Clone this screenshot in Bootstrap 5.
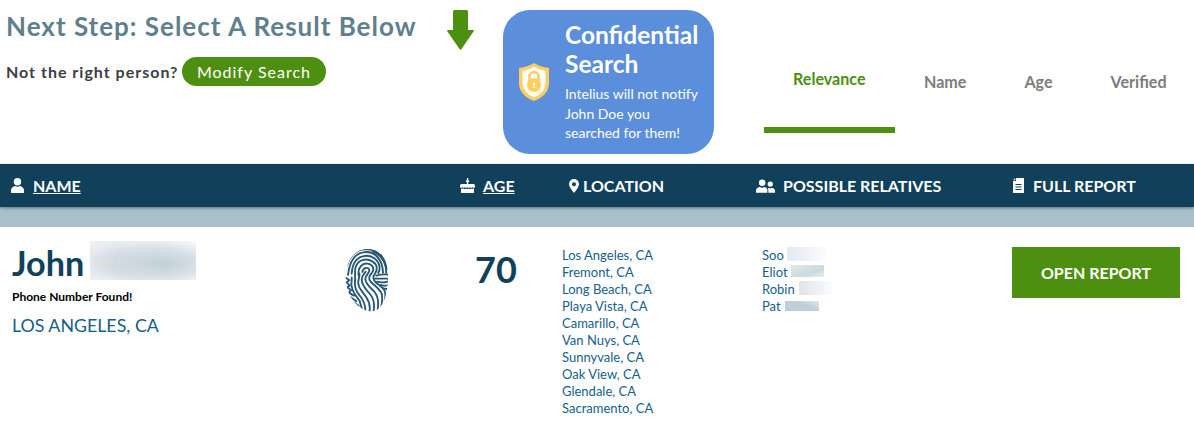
<!DOCTYPE html>
<html lang="en">
<head>
<meta charset="utf-8">
<meta name="viewport" content="width=device-width, initial-scale=1">
<title>Search Results</title>
<link href="https://cdn.jsdelivr.net/npm/bootstrap@5.3.0/dist/css/bootstrap.min.css" rel="stylesheet">
<style>
  body { font-family: Lato, "Liberation Sans", sans-serif; color: #10405a; background: #fff; overflow: hidden; }
  .top-bar { height: 164px; }
  .intro { width: 503px; padding: 10px 0 0 6px; }
  .step-title { font-size: 26px; line-height: 34px; font-weight: 700; letter-spacing: 1px; color: #5f7f8c; width: 441px; margin-top: -1px; }
  .wrong-person { font-size: 16px; font-weight: 700; letter-spacing: 1px; color: #3c4043; margin-top: 7px; }
  .btn-modify { background: #4d8f10; color: #fff; font-size: 16px; line-height: 29px; letter-spacing: 1px; padding: 0 14.5px; border-radius: 15px; border: 0; margin-left: 4px; }
  .notice { width: 211px; height: 144px; margin-top: 10px; padding: 11px 0 0 16px; border-radius: 27px; background: #5b8edb; color: #fff; }
  .notice svg { margin-top: 42px; margin-right: 16px; }
  .notice-title { font-size: 24.5px; line-height: 29px; font-weight: 700; margin-top: -1px; }
  .notice-text { font-size: 14px; line-height: 19.5px; margin-top: 6px; }
  .sort-tabs { margin-left: 50px; height: 133px; font-size: 16.1px; line-height: 24px; font-weight: 700; color: #7c7c7c; }
  .sort-tabs .sort-tab { padding: 70px 29px 0; }
  .sort-tabs .sort-on { padding-top: 67px; color: #4d8f10; border-bottom: 6px solid #4d8f10; width: 131px; }
  .result-grid { display: grid; grid-template-columns: 345px 115px 102px 194px 256px 182px; }
  .result-head { height: 43px; background: #10405a; color: #fff; font-size: 16px; font-weight: 700; box-shadow: 0 1px 3px rgba(0,0,0,.4); position: relative; }
  .icon-name { padding-left: 11px; gap: 9px; }
  .icon-place { padding-left: 7px; }
  .band { height: 20px; background: #a9c0cb; }
  .person-cell { padding-left: 12px; }
  .person { font-size: 34.2px; line-height: 44px; font-weight: 700; padding-top: 14px; width: 78px; }
  .found { font-size: 12px; line-height: 16px; font-weight: 700; color: #000; margin-top: 4px; }
  .city { font-size: 17.8px; line-height: 24px; color: #14608a; margin-top: 8px; }
  .age-num { font-size: 36px; line-height: 46px; font-weight: 700; padding: 19px 0 0 15px; }
  .print-cell { padding-top: 21px; }
  .places { font-size: 13px; line-height: 17px; color: #14608a; padding-top: 20px; }
  .kin { padding-left: 6px; }
  .veil { display: inline-block; flex-shrink: 0; }
  .veil-name { width: 106px; height: 39px; margin-top: 14px; background: radial-gradient(ellipse at 68% 58%, #c3d0d9 0, rgba(204,215,222,.7) 32%, rgba(223,229,234,0) 70%), linear-gradient(180deg, rgba(255,255,255,.5), rgba(255,255,255,0) 40%, rgba(255,255,255,0) 70%, rgba(255,255,255,.4)), linear-gradient(90deg, #e3e8ec, #d5dde3 25%, #d8e0e5 65%, #edf1f3); }
  .veil-soo { margin-left: 3px; width: 41px; height: 14px; background: linear-gradient(90deg, #e4eaf1, #eff2f6 50%, #fdfdfe); }
  .veil-eliot { margin: 1px 0 0 3px; width: 33px; height: 12px; background: linear-gradient(160deg, #e3ebe1, #cad9df 65%, #e9eff3); }
  .veil-robin { margin-left: 4px; width: 34px; height: 14px; background: linear-gradient(90deg, #e3e4e9, #eceef3 45%, #fcfcfd); }
  .veil-pat { margin: 3px 0 0 4px; width: 34px; height: 10px; background: linear-gradient(20deg, #b9cdd9, #bfd0dc 60%, #dfe8ed); }
  .btn-open { background: #4d8f10; color: #fff; font-size: 16px; font-weight: 700; width: 168px; height: 51px; border-radius: 0; border: 0; margin-top: 20px; }
  .relative-row { height: 17px; }
</style>
</head>
<body>
<header class="top-bar d-flex align-items-start">
  <div class="intro flex-shrink-0">
    <div class="d-flex align-items-start">
      <h1 class="step-title mb-0 text-nowrap">Next Step: Select A Result Below</h1>
      <svg width="27" height="40" viewBox="0 0 27 40" fill="#4d8f10"><path d="M6 1.500Q6 0 7.500 0h12Q21 0 21 1.500V20h5q1.500 0 .7 1.300L14.500 39q-1 1.500-2 0L.3 21.300Q-.4 20 1 20h5z"/></svg>
    </div>
    <div class="wrong-person d-flex align-items-center">Not the right person?<button class="btn-modify" type="button">Modify Search</button></div>
  </div>
  <section class="notice d-flex align-items-start flex-shrink-0">
    <svg class="flex-shrink-0" width="30" height="38" viewBox="0 0 30 38"><path d="M15 0Q21 4 30 5V20q0 12-15 18Q0 32 0 20V5Q9 4 15 0z" fill="#ffce5c"/><path d="M15 3.800Q20 7 26.500 8V20q0 9.500-11.500 14.500Q3.500 29.500 3.500 20V8Q10 7 15 3.800z" fill="#fff"/><path d="M10.500 18v-4.500a4.500 4.500 0 0 1 9 0V18" fill="none" stroke="#ffce5c" stroke-width="2.600"/><circle cx="15" cy="22" r="7" fill="#ffce5c"/><circle cx="15" cy="20.800" r="1.300" fill="#fff"/><path d="M14.300 21h1.400v4h-1.400z" fill="#fff"/></svg>
    <div>
      <div class="notice-title">Confidential<br>Search</div>
      <div class="notice-text text-nowrap">Intelius will not notify<br>John Doe you<br>searched for them!</div>
    </div>
  </section>
  <nav class="sort-tabs d-flex">
    <div class="sort-tab sort-on">Relevance</div>
    <div class="sort-tab">Name</div>
    <div class="sort-tab">Age</div>
    <div class="sort-tab">Verified</div>
  </nav>
</header>
<div class="result-head result-grid align-items-center">
  <div class="icon-name d-flex align-items-center"><svg width="13" height="15" viewBox="0 0 13 15" fill="#fff"><circle cx="6.500" cy="3.700" r="3.700"/><path d="M0 15v-2.500Q0 9 4 8q2.500 1.600 5 0 4 1 4 4.500V15z"/></svg><u>NAME</u></div>
  <div></div>
  <div class="d-flex align-items-center"><svg width="15" height="15" viewBox="0 0 15 15" fill="#fff"><path d="M6.900 0h1.300v6H6.900zM5.900 2.500h3.300V4H5.900zM1.500 6h12Q15 6 15 8v1.200q-1.300 1.200-2.500 0-1.300 1-2.500 0-1.300 1-2.500 0-1.300 1-2.500 0-1.300 1-2.500 0-1.200 1-2.500 0V8Q0 6 1.500 6zM1 10.600q1.500.6 2.700-.2 1.300 1 2.500 0 1.300 1 2.600 0 1.300 1 2.500 0Q12.500 11.200 14 10.600V15H1z"/></svg><u class="ms-2">AGE</u></div>
  <div class="icon-place d-flex align-items-center"><svg width="10" height="14" viewBox="0 0 10 14" fill="#fff"><path fill-rule="evenodd" d="M5 0a5 5 0 0 1 5 5q0 3-5 9-5-6-5-9a5 5 0 0 1 5-5zm0 3.200a2 2 0 1 0 0 4 2 2 0 0 0 0-4z"/></svg><span class="ms-1">LOCATION</span></div>
  <div class="d-flex align-items-center"><svg width="19" height="14" viewBox="0 0 20 14" fill="#fff"><circle cx="6.500" cy="3.500" r="3.400"/><circle cx="15" cy="5" r="2.800"/><path d="M0 14v-2.500Q0 9 4 8q2.500 1.500 5 0 3 .8 3 3.500V14zM13 14v-3l-.7-1.600 1-.4q1.700 1 3.500 0Q20 9.500 20 12v2z"/></svg><span class="ms-2">POSSIBLE RELATIVES</span></div>
  <div class="d-flex align-items-center"><svg width="13" height="15" viewBox="-1 0 13 15"><path d="M3 0h8v15H0V3h3z" fill="#fff"/><path d="M0 2.200 2.200 0v2.200z" fill="#fff"/><path d="M2.500 6.500h6M2.500 9h6M2.500 11.500h6" stroke="#10405a" stroke-width="1"/></svg><span class="ms-2">FULL REPORT</span></div>
</div>
<div class="band"></div>
<main class="result-grid">
  <div class="person-cell">
    <div class="d-flex align-items-start"><span class="person">John</span><span class="veil veil-name"></span></div>
    <div class="found">Phone Number Found!</div>
    <div class="city">LOS ANGELES, CA</div>
  </div>
  <div class="print-cell">
    <svg width="44" height="65" viewBox="30 20 132 195" fill="none" stroke="#285872" stroke-width="5.600" stroke-linecap="round">
      <clipPath id="oval"><path d="M98 23C135 23 157 48 159 100C160 158 144 207 112 210C78 213 32 170 32 110C32 58 59 23 98 23z"/></clipPath>
      <g clip-path="url(#oval)">
        <path d="M82 92C85 78 102 75 103 87C103 96 92 101 91 112C90 126 104 137 117 150C131 164 132 184 127 212"/>
        <path d="M92 91C88 97 80 103 80 115C80 132 93 145 105 158C117 173 120 190 115 212"/>
        <path d="M71 103C67 77 84 64 98 67C115 70 119 83 111 94C103 104 98 111 108 122C121 135 137 145 141 160Q143 174 139 196"/>
        <path d="M73 96C75 107 68 116 70 127C72 144 84 153 93 166C103 181 107 195 103 212"/>
        <path d="M60 121C62 105 58 95 61 81C67 54 94 49 112 60C127 69 129 85 120 97C112 106 114 117 124 125C135 134 151 140 151 157Q152 169 149 179"/>
        <path d="M60 116C58 135 62 149 73 161C84 174 92 187 91 210"/>
        <path d="M50 97C52 68 63 50 83 45C112 37 133 59 134 80Q134 88 130 95"/>
        <path d="M50 108C52 117 47 124 50 136C54 156 65 166 74 179L80 201"/>
        <path d="M39 101C44 59 60 37 84 33C119 26 143 55 144 94"/>
        <path d="M36 72C49 34 72 21 99 24C133 26 153 56 154 95"/>
        <path d="M113 30C136 39 148 59 151 72M138 40C149 53 155 74 156 83"/>
        <path d="M124 103Q142 97 160 100M120 112H160M126 121Q143 126 160 120M136 131Q149 135 160 131M145 141L160 144"/>
        <path d="M32 109L43 116L35 123L44 132L37 138L48 147L41 154L57 163M47 168L64 180M58 184L71 194M69 199L80 208"/>
      </g>
    </svg>
  </div>
  <div class="age-num">70</div>
  <div class="places text-nowrap">Los Angeles, CA<br>Fremont, CA<br>Long Beach, CA<br>Playa Vista, CA<br>Camarillo, CA<br>Van Nuys, CA<br>Sunnyvale, CA<br>Oak View, CA<br>Glendale, CA<br>Sacramento, CA</div>
  <div class="places kin">
    <div class="relative-row d-flex">Soo<span class="veil veil-soo"></span></div>
    <div class="relative-row d-flex">Eliot<span class="veil veil-eliot"></span></div>
    <div class="relative-row d-flex">Robin<span class="veil veil-robin"></span></div>
    <div class="relative-row d-flex">Pat<span class="veil veil-pat"></span></div>
  </div>
  <div><button class="btn-open" type="button">OPEN REPORT</button></div>
</main>
<script src="https://cdn.jsdelivr.net/npm/bootstrap@5.3.0/dist/js/bootstrap.bundle.min.js"></script>
</body>
</html>
